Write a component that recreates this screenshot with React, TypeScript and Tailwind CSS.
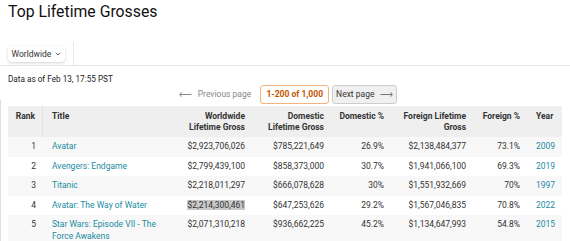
import React from "react";

const rows = [
  ["1", "Avatar", "$2,923,706,026", "$785,221,649", "26.9%", "$2,138,484,377", "73.1%", "2009"],
  ["2", "Avengers: Endgame", "$2,799,439,100", "$858,373,000", "30.7%", "$1,941,066,100", "69.3%", "2019"],
  ["3", "Titanic", "$2,218,011,297", "$666,078,628", "30%", "$1,551,932,669", "70%", "1997"],
  ["4", "Avatar: The Way of Water", "$2,214,300,461", "$647,253,626", "29.2%", "$1,567,046,835", "70.8%", "2022"],
  ["5", "Star Wars: Episode VII - The|Force Awakens", "$2,071,310,218", "$936,662,225", "45.2%", "$1,134,647,993", "54.8%", "2015"],
];

const gridCols = "grid grid-cols-[35px_127px_82px_79px_60px_82px_54px_35px]";

function Header() {
  return (
    <div className={`${gridCols} bg-[#efefef] font-bold text-[#333] leading-[11px]`}>
      <div className="py-[4.5px] pr-[7px] text-right border-r border-[#e2e2e2]">Rank</div>
      <div className="py-[4.5px] pl-[9px]">Title</div>
      <div className="py-[4.5px] pr-[7px] text-right">
        Worldwide
        <br />
        Lifetime Gross
      </div>
      <div className="py-[4.5px] pr-[7px] text-right">
        Domestic
        <br />
        Lifetime Gross
      </div>
      <div className="py-[4.5px] pr-[7px] text-right">Domestic %</div>
      <div className="py-[4.5px] pr-[7px] text-right">
        Foreign Lifetime
        <br />
        Gross
      </div>
      <div className="py-[4.5px] pr-[7px] text-right">Foreign %</div>
      <div className="py-[4.5px] pl-[9px]">Year</div>
    </div>
  );
}

function Row({ r, i }: { r: string[]; i: number }) {
  const bg = i % 2 === 0 ? "bg-[#f8f8f8]" : "bg-white";
  const titleParts = r[1].split("|");
  return (
    <div className={`${gridCols} ${bg} text-[#333] leading-[11.5px]`}>
      <div className="py-[4px] pr-[7px] text-right">{r[0]}</div>
      <div className="py-[4px] pl-[9px] text-[#218b9f] whitespace-nowrap">
        {titleParts.map((t, k) => (
          <React.Fragment key={k}>
            {k > 0 && <br />}
            {t}
          </React.Fragment>
        ))}
      </div>
      <div className="py-[4px] pr-[7px] text-right">
        {i === 3 ? <span className="bg-[#c9c9c9]">{r[2]}</span> : r[2]}
      </div>
      <div className="py-[4px] pr-[7px] text-right">{r[3]}</div>
      <div className="py-[4px] pr-[7px] text-right">{r[4]}</div>
      <div className="py-[4px] pr-[7px] text-right">{r[5]}</div>
      <div className="py-[4px] pr-[7px] text-right">{r[6]}</div>
      <div className="py-[4px] pl-[9px] text-[#218b9f]">{r[7]}</div>
    </div>
  );
}

export default function App() {
  return (
    <div className="relative w-[570px] h-[241px] overflow-hidden bg-white font-[Roboto,'Liberation_Sans',sans-serif] text-[8.5px] text-[#333]">
      <h1 className="pl-[8px] pt-[2px] text-[15.8px] leading-[20px] font-normal text-[#111]">
        Top Lifetime Grosses
      </h1>
      <div className="mt-[20px] flex h-[24px] border-b border-[#e6e6e6]">
        <div className="flex items-start pl-[8px] pr-[8px] pt-[4px] border-r border-[#e6e6e6]">
          <div className="flex h-[16px] w-[57px] items-center justify-center gap-[4px] rounded-[4px] bg-white shadow-[0_1px_3px_rgba(0,0,0,0.18)] text-[#333]">
            <span>Worldwide</span>
            <svg width="6" height="4" viewBox="0 0 6 4" fill="none">
              <path d="M0.7 0.8 L3 3 L5.3 0.8" stroke="#555" strokeWidth="0.9" />
            </svg>
          </div>
        </div>
      </div>
      <div className="pl-[8px] pt-[7px] leading-[12px] text-[8.2px] text-[#222]">Data as of Feb 13, 17:55 PST</div>
      <div className="flex w-[554px] ml-[8px] justify-center pl-[6px]">
        <div className="flex items-center h-[19px]">
          <div className="flex items-center gap-[6px] text-[#8a8a8a]">
            <span className="text-[9px]">⟵</span>
            <span>Previous page</span>
          </div>
          <div className="ml-[9px] flex h-[19px] w-[69px] items-center justify-center rounded-[3px] border border-[#f2b47c] bg-white font-bold text-[#c45500]">
            1-200 of 1,000
          </div>
          <div className="ml-[3px] flex h-[19px] w-[65px] items-center justify-center gap-[6px] rounded-[3px] border border-[#cdcdcd] bg-[#f0f0f0] text-[#333]">
            <span>Next page</span>
            <span className="text-[9px] text-[#777]">⟶</span>
          </div>
        </div>
      </div>
      <div className="mt-[2px] ml-[8px] w-[554px]">
        <Header />
        {rows.map((r, i) => (
          <Row key={i} r={r} i={i} />
        ))}
      </div>
      <div className="absolute left-0 top-[100px] bottom-0 w-px bg-[#dedede]" />
    </div>
  );
}
